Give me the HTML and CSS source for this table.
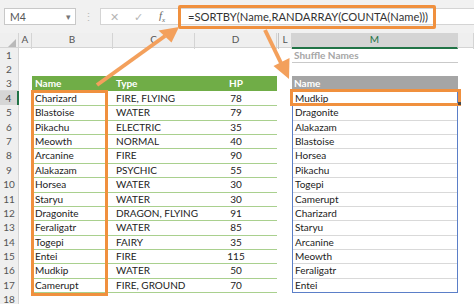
FILE: index.html
```html
<!DOCTYPE html>
<html lang="en">
<head>
  <meta charset="UTF-8" />
  <title>Shuffle Names</title>
  <link rel="stylesheet" href="styles.css">
</head>
<body>
  <div class="formula-bar">
    <div class="name-box"><span>M4</span><span class="caret">&#9662;</span></div>
    <div class="grip">&#8942;</div>
    <div class="fx-box">
      <span class="fx-btn">&#10005;</span>
      <span class="fx-btn">&#10003;</span>
      <span class="fx-btn fx">f<sub>x</sub></span>
      <div class="formula">=SORTBY(Name,RANDARRAY(COUNTA(Name)))</div>
    </div>
  </div>

  <div class="sheet">
    <div class="row head">
      <div class="corner"></div><div class="col">A</div><div class="col">B</div><div class="col">C</div><div class="col">D</div><div class="col hidden"></div><div class="col">L</div><div class="col sel">M</div><div class="col"></div>
    </div>
    <div class="row"><div class="rh">1</div><div></div><div></div><div></div><div></div><div></div><div></div><div class="c title">Shuffle Names</div><div></div></div>
    <div class="row"><div class="rh">2</div><div></div><div></div><div></div><div></div><div></div><div></div><div></div><div></div></div>
    <div class="row"><div class="rh">3</div><div></div><div class="c th">Name</div><div class="c th">Type</div><div class="c th hp">HP</div><div></div><div></div><div class="c sh">Name</div><div></div></div>
    <div class="row"><div class="rh sel">4</div><div></div><div class="c t">Charizard</div><div class="c t">FIRE, FLYING</div><div class="c t hp">78</div><div></div><div></div><div class="c s">Mudkip</div><div></div></div>
    <div class="row"><div class="rh">5</div><div></div><div class="c t">Blastoise</div><div class="c t">WATER</div><div class="c t hp">79</div><div></div><div></div><div class="c s">Dragonite</div><div></div></div>
    <div class="row"><div class="rh">6</div><div></div><div class="c t">Pikachu</div><div class="c t">ELECTRIC</div><div class="c t hp">35</div><div></div><div></div><div class="c s">Alakazam</div><div></div></div>
    <div class="row"><div class="rh">7</div><div></div><div class="c t">Meowth</div><div class="c t">NORMAL</div><div class="c t hp">40</div><div></div><div></div><div class="c s">Blastoise</div><div></div></div>
    <div class="row"><div class="rh">8</div><div></div><div class="c t">Arcanine</div><div class="c t">FIRE</div><div class="c t hp">90</div><div></div><div></div><div class="c s">Horsea</div><div></div></div>
    <div class="row"><div class="rh">9</div><div></div><div class="c t">Alakazam</div><div class="c t">PSYCHIC</div><div class="c t hp">55</div><div></div><div></div><div class="c s">Pikachu</div><div></div></div>
    <div class="row"><div class="rh">10</div><div></div><div class="c t">Horsea</div><div class="c t">WATER</div><div class="c t hp">30</div><div></div><div></div><div class="c s">Togepi</div><div></div></div>
    <div class="row"><div class="rh">11</div><div></div><div class="c t">Staryu</div><div class="c t">WATER</div><div class="c t hp">30</div><div></div><div></div><div class="c s">Camerupt</div><div></div></div>
    <div class="row"><div class="rh">12</div><div></div><div class="c t">Dragonite</div><div class="c t">DRAGON, FLYING</div><div class="c t hp">91</div><div></div><div></div><div class="c s">Charizard</div><div></div></div>
    <div class="row"><div class="rh">13</div><div></div><div class="c t">Feraligatr</div><div class="c t">WATER</div><div class="c t hp">85</div><div></div><div></div><div class="c s">Staryu</div><div></div></div>
    <div class="row"><div class="rh">14</div><div></div><div class="c t">Togepi</div><div class="c t">FAIRY</div><div class="c t hp">35</div><div></div><div></div><div class="c s">Arcanine</div><div></div></div>
    <div class="row"><div class="rh">15</div><div></div><div class="c t">Entei</div><div class="c t">FIRE</div><div class="c t hp">115</div><div></div><div></div><div class="c s">Meowth</div><div></div></div>
    <div class="row"><div class="rh">16</div><div></div><div class="c t">Mudkip</div><div class="c t">WATER</div><div class="c t hp">50</div><div></div><div></div><div class="c s">Feraligatr</div><div></div></div>
    <div class="row"><div class="rh">17</div><div></div><div class="c t">Camerupt</div><div class="c t">FIRE, GROUND</div><div class="c t hp">70</div><div></div><div></div><div class="c s last">Entei</div><div></div></div>
    <div class="row"><div class="rh">18</div><div></div><div></div><div></div><div></div><div></div><div></div><div></div><div></div></div>
  </div>

  <!-- callouts drawn over the sheet -->
  <div class="mark names-mark"></div>
  <div class="mark cell-mark"><span class="handle"></span></div>
  <svg class="arrows" viewBox="0 0 474 304" width="474" height="304">
    <line x1="97" y1="85" x2="165" y2="36" />
    <polygon points="179,27 171.5,42.5 158.5,30.5" />
    <line x1="265" y1="30" x2="281" y2="63" />
    <polygon points="289,79 289.5,58 273.5,66" />
  </svg>
</body>
</html>
```

FILE: styles.css
```css
body {
  margin: 0;
  width: 474px;
  height: 304px;
  overflow: hidden;
  position: relative;
  background: #fff;
  font-family: Lato, sans-serif;
  color: #222;
}

/* formula bar */
.formula-bar {
  height: 33px;
  box-sizing: border-box;
  padding-top: 8px;
  background: #f1f1f1;
  display: flex;
  align-items: flex-start;
}
.name-box {
  margin-left: 4px;
  width: 72px;
  height: 17px;
  box-sizing: border-box;
  border: 1px solid #c8c8c8;
  background: #fff;
  display: flex;
  align-items: center;
  justify-content: space-between;
  padding: 0 4px 0 5px;
  font-size: 10.5px;
  color: #555;
}
.caret {
  font-size: 9px;
  color: #777;
}
.grip {
  width: 24px;
  text-align: center;
  color: #bbb;
  font-size: 11px;
  line-height: 17px;
}
.fx-box {
  flex: 1;
  height: 17px;
  box-sizing: border-box;
  border: 1px solid #d4d4d4;
  border-right: none;
  background: #fff;
  display: flex;
  align-items: center;
}
.fx-btn {
  width: 24px;
  text-align: center;
  color: #b5b5b5;
  font-size: 11px;
}
.fx-btn:first-child {
  margin-left: 1px;
}
.fx {
  font-family: "Liberation Serif", serif;
  font-style: italic;
  color: #666;
  font-size: 11px;
}
.fx sub {
  font-size: 7px;
}
.formula {
  margin-left: 4px;
  height: 24px;
  box-sizing: border-box;
  border: 3px solid #f0903e;
  border-radius: 2px;
  padding: 0 5px 0 7px;
  display: flex;
  align-items: center;
  font-family: "Liberation Sans Narrow", Lato, sans-serif;
  font-size: 11.2px;
  color: #333;
  white-space: nowrap;
}

/* worksheet grid */
.sheet {
  display: flex;
  flex-direction: column;
}
.row {
  display: grid;
  grid-template-columns: 19px 13px 81px 82px 82px 2px 13px 166px 16px;
  height: 14.4px;
  font-size: 10px;
}
.row.head {
  height: 14.6px;
  background: #efefef;
  border-bottom: 1px solid #d4d4d4;
  box-sizing: border-box;
}
.corner {
  position: relative;
  border-right: 1px solid #d4d4d4;
}
.corner::after {
  content: "";
  position: absolute;
  right: 2px;
  bottom: 2px;
  border-left: 8px solid transparent;
  border-bottom: 8px solid #b9b9b9;
}
.col {
  border-right: 1px solid #d4d4d4;
  text-align: center;
  color: #555;
  line-height: 13.6px;
}
.col.hidden {
  border-right: 1px solid #c4c4c4;
}
.col.sel {
  background: #d4d4d4;
  color: #217346;
  border-bottom: 2px solid #217346;
}
.rh {
  background: #efefef;
  border-right: 1px solid #d4d4d4;
  border-bottom: 1px solid #dcdcdc;
  box-sizing: border-box;
  text-align: center;
  color: #555;
  line-height: 14px;
}
.rh.sel {
  background: #d6d6d6;
  border-right: 2px solid #217346;
  color: #444;
}
.c {
  padding-left: 3px;
  line-height: 14.4px;
  white-space: nowrap;
  box-sizing: border-box;
}
.title {
  color: #a6a6a6;
  font-weight: bold;
  padding-left: 2px;
  border-bottom: 1px solid #c9c9c9;
}
.th {
  background: #70ad47;
  color: #fff;
  font-weight: bold;
}
.t {
  border-bottom: 1px solid #a9d08e;
}
.hp {
  text-align: center;
  padding-left: 0;
}
.sh {
  background: #a5a5a5;
  color: #fff;
  font-weight: bold;
  padding-left: 2px;
}
.s {
  padding-left: 2px;
  border-left: 1px solid #5b7fc8;
  border-right: 1px solid #5b7fc8;
  border-bottom: 1px solid #d9d9d9;
}
.s.last {
  border-bottom: 1px solid #5b7fc8;
}

/* orange call-out boxes */
.mark {
  position: absolute;
  box-sizing: border-box;
  border: 3px solid #f0903e;
}
.names-mark {
  left: 31px;
  top: 90px;
  width: 77px;
  height: 206px;
}
.cell-mark {
  left: 290px;
  top: 89px;
  width: 171px;
  height: 17px;
}
.handle {
  position: absolute;
  right: -3px;
  bottom: -2px;
  width: 3px;
  height: 3px;
  background: #4a4a4a;
}
.arrows {
  position: absolute;
  left: 0;
  top: 0;
  pointer-events: none;
}
.arrows line {
  stroke: #f3a05c;
  stroke-width: 4;
}
.arrows polygon {
  fill: #f3a05c;
}
```
